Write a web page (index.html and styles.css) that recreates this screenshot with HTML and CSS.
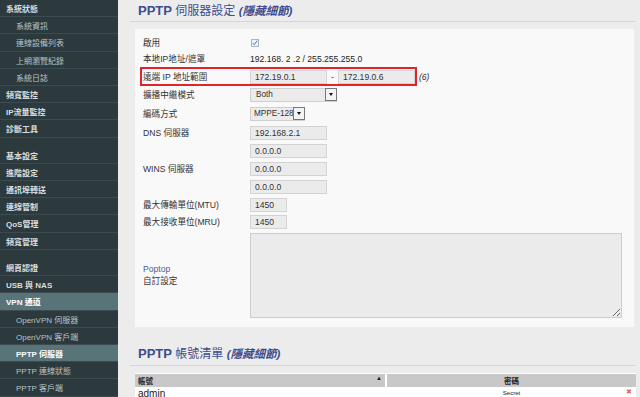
FILE: index.html
```html
<!DOCTYPE html>
<html lang="zh-Hant">
<head>
    <meta charset="UTF-8">
    <meta name="viewport" content="width=device-width, initial-scale=1.0">
    <title>PPTP 伺服器設定</title>
    <link rel="stylesheet" href="styles.css">
</head>
<body>
    <div class="page">
        <!-- Sidebar menu -->
        <nav class="sidebar">
            <div class="nav-item">系統狀態</div>
            <div class="nav-item sub">系統資訊</div>
            <div class="nav-item sub">連線設備列表</div>
            <div class="nav-item sub">上網瀏覽紀錄</div>
            <div class="nav-item sub">系統日誌</div>
            <div class="nav-item">頻寬監控</div>
            <div class="nav-item">IP流量監控</div>
            <div class="nav-item">診斷工具</div>
            <div class="nav-gap"></div>
            <div class="nav-item">基本設定</div>
            <div class="nav-item">進階設定</div>
            <div class="nav-item">通訊埠轉送</div>
            <div class="nav-item">連線管制</div>
            <div class="nav-item">QoS管理</div>
            <div class="nav-item">頻寬管理</div>
            <div class="nav-gap"></div>
            <div class="nav-item">網頁認證</div>
            <div class="nav-item">USB 與 NAS</div>
            <div class="nav-item active">VPN 通道</div>
            <div class="nav-item sub">OpenVPN 伺服器</div>
            <div class="nav-item sub">OpenVPN 客戶端</div>
            <div class="nav-item sub active">PPTP 伺服器</div>
            <div class="nav-item sub">PPTP 連線狀態</div>
            <div class="nav-item sub">PPTP 客戶端</div>
        </nav>

        <main class="content">
            <!-- Server settings -->
            <div class="section-head">
                <h1 class="section-title"><b>PPTP</b> 伺服器設定 <i>(隱藏細節)</i></h1>
            </div>

            <section class="panel">
                <div class="row h17">
                    <span class="label">啟用</span>
                    <span class="checkbox">
                        <svg width="8" height="8" viewBox="0 0 8 8"><path d="M1.8 4.2 L3.2 5.8 L6.2 1.6" fill="none" stroke="#5a74b0" stroke-width="1"/></svg>
                    </span>
                </div>
                <div class="row h16">
                    <span class="label">本地IP地址/遮罩</span>
                    <span class="text-value">192.168. 2 .2 / 255.255.255.0</span>
                </div>
                <div class="row h19">
                    <div class="highlight">
                        <span class="label">遠端 IP 地址範圍</span>
                        <span class="field">172.19.0.1</span>
                        <span class="dash">-</span>
                        <span class="field">172.19.0.6</span>
                    </div>
                    <span class="note">(6)</span>
                </div>
                <div class="row h18">
                    <span class="label">擴播中繼模式</span>
                    <span class="select wide">Both<span class="arrow"></span></span>
                </div>
                <div class="row h20">
                    <span class="label">編碼方式</span>
                    <span class="select">MPPE-128<span class="arrow"></span></span>
                </div>
                <div class="row h18">
                    <span class="label">DNS 伺服器</span>
                    <span class="field">192.168.2.1</span>
                </div>
                <div class="row h18">
                    <span class="label"></span>
                    <span class="field">0.0.0.0</span>
                </div>
                <div class="row h18">
                    <span class="label">WINS 伺服器</span>
                    <span class="field">0.0.0.0</span>
                </div>
                <div class="row h18">
                    <span class="label"></span>
                    <span class="field">0.0.0.0</span>
                </div>
                <div class="row h17">
                    <span class="label">最大傳輸單位(MTU)</span>
                    <span class="field short">1450</span>
                </div>
                <div class="row h18">
                    <span class="label">最大接收單位(MRU)</span>
                    <span class="field short">1450</span>
                </div>
                <div class="row">
                    <span class="label"><span class="link">Poptop</span><br>自訂設定</span>
                    <textarea class="custom"></textarea>
                </div>
            </section>

            <!-- Account list -->
            <div class="section-head second">
                <h1 class="section-title"><b>PPTP</b> 帳號清單 <i>(隱藏細節)</i></h1>
            </div>

            <table class="grid">
                <thead>
                    <tr>
                        <th class="col-user">帳號 <span class="sort">▲</span></th>
                        <th class="col-pass">密碼</th>
                    </tr>
                </thead>
                <tbody>
                    <tr>
                        <td class="user">admin</td>
                        <td class="pass">Secret<span class="del">✖</span></td>
                    </tr>
                </tbody>
            </table>
        </main>
    </div>
</body>
</html>
```

FILE: styles.css
```css
body {
    margin: 0;
    padding: 0;
    font-family: "Liberation Sans", "Noto Sans CJK TC", sans-serif;
    background-color: #ececec;
    color: #333;
}

.page {
    display: flex;
    height: 397px;
    overflow: hidden;
}

/* Sidebar */
.sidebar {
    width: 118px;
    flex-shrink: 0;
    background-color: #2c393d;
}

.nav-item {
    height: 16.2px;
    line-height: 19px;
    overflow: hidden;
    border-bottom: 1px solid #3d4b50;
    padding-left: 6px;
    font-size: 8px;
    font-weight: bold;
    color: #d8dddf;
    white-space: nowrap;
}

.nav-item.sub {
    padding-left: 16px;
    font-weight: normal;
    color: #b9c3c5;
}

.nav-item.active {
    background-color: #587479;
    color: #fff;
    font-weight: bold;
}

.nav-gap {
    height: 9.2px;
}

/* Main area */
.content {
    flex: 1;
    padding: 0 4px 0 12px;
    overflow: hidden;
}

.section-head {
    height: 21px;
    border-bottom: 1px solid #d6d6d6;
}

.section-head.second {
    margin-top: 16px;
    height: 22px;
}

.section-title {
    margin: 0;
    padding-left: 8px;
    line-height: 21px;
    font-size: 12px;
    font-weight: normal;
    color: #3d4c8c;
    white-space: nowrap;
}

.section-title b {
    font-size: 13px;
}

.section-title i {
    font-size: 11.5px;
    font-weight: bold;
}

.panel {
    margin: 7px 2px 0 5px;
    padding: 5px 0 9px 8px;
    background-color: #f9f9f9;
    font-size: 8.6px;
}

.row {
    display: flex;
    align-items: center;
}

.row.h16 { height: 16px; }
.row.h17 { height: 17px; }
.row.h18 { height: 18px; }
.row.h19 { height: 19px; }
.row.h20 { height: 20px; }

.label {
    width: 107px;
    flex-shrink: 0;
    color: #333;
    line-height: 12px;
}

.link {
    color: #4a5f9e;
}

.text-value {
    color: #222;
}

.checkbox {
    width: 8px;
    height: 8px;
    margin-left: 1px;
    border: 1px solid #a9b6c6;
    background-color: #eef1f7;
    box-sizing: border-box;
    display: flex;
}

.checkbox svg {
    margin: -1px;
}

.field {
    width: 77px;
    height: 14px;
    box-sizing: border-box;
    border: 1px solid #d3d3d3;
    background-color: #ebebeb;
    padding-left: 4px;
    line-height: 12px;
    color: #333;
}

.field.short {
    width: 37px;
}

.highlight {
    display: flex;
    align-items: center;
    height: 19px;
    box-sizing: border-box;
    margin-left: -3px;
    padding-left: 1px;
    border: 2px solid #e2232a;
}

.dash {
    margin: 0 4px;
}

.note {
    margin-left: 2px;
    font-style: italic;
}

.select {
    position: relative;
    width: 55px;
    height: 14px;
    box-sizing: border-box;
    border: 1px solid #cfcfcf;
    background-color: #ebebeb;
    padding-left: 3px;
    line-height: 12px;
    font-size: 8.2px;
    color: #333;
    white-space: nowrap;
}

.select.wide {
    width: 87px;
    padding-left: 5px;
}

.arrow {
    position: absolute;
    right: -1px;
    top: -1px;
    width: 12px;
    height: 13px;
    box-sizing: border-box;
    border: 1px solid #777;
    background-color: #f3f3f3;
}

.arrow::after {
    content: "";
    position: absolute;
    left: 3px;
    top: 4px;
    border-left: 2.5px solid transparent;
    border-right: 2.5px solid transparent;
    border-top: 3px solid #111;
}

.custom {
    width: 372px;
    height: 85px;
    margin: 2px 0 0;
    box-sizing: border-box;
    border: 1px solid #cdcdcd;
    background-color: #ebebeb;
    font-family: inherit;
}

/* Account table */
.grid {
    width: 501px;
    margin: 7px 0 0 5px;
    border-collapse: separate;
    border-spacing: 0;
    border-top: 1px solid #fff;
}

.grid th {
    height: 13px;
    padding: 0 3px;
    background-color: #c8c8c8;
    font-size: 7.5px;
    color: #222;
}

.col-user {
    width: 244px;
    text-align: left;
    border-right: 2px solid #fff;
}

.sort {
    float: right;
    font-size: 6px;
}

.col-pass {
    text-align: center;
}

.grid td {
    background-color: #fff;
    height: 12px;
    padding: 0 3px;
}

.user {
    font-size: 10px;
    color: #222;
}

.pass {
    position: relative;
    text-align: center;
    font-size: 6px;
    color: #222;
}

.del {
    position: absolute;
    right: 4px;
    top: 1px;
    font-size: 7px;
    color: #e06a6a;
}
```
